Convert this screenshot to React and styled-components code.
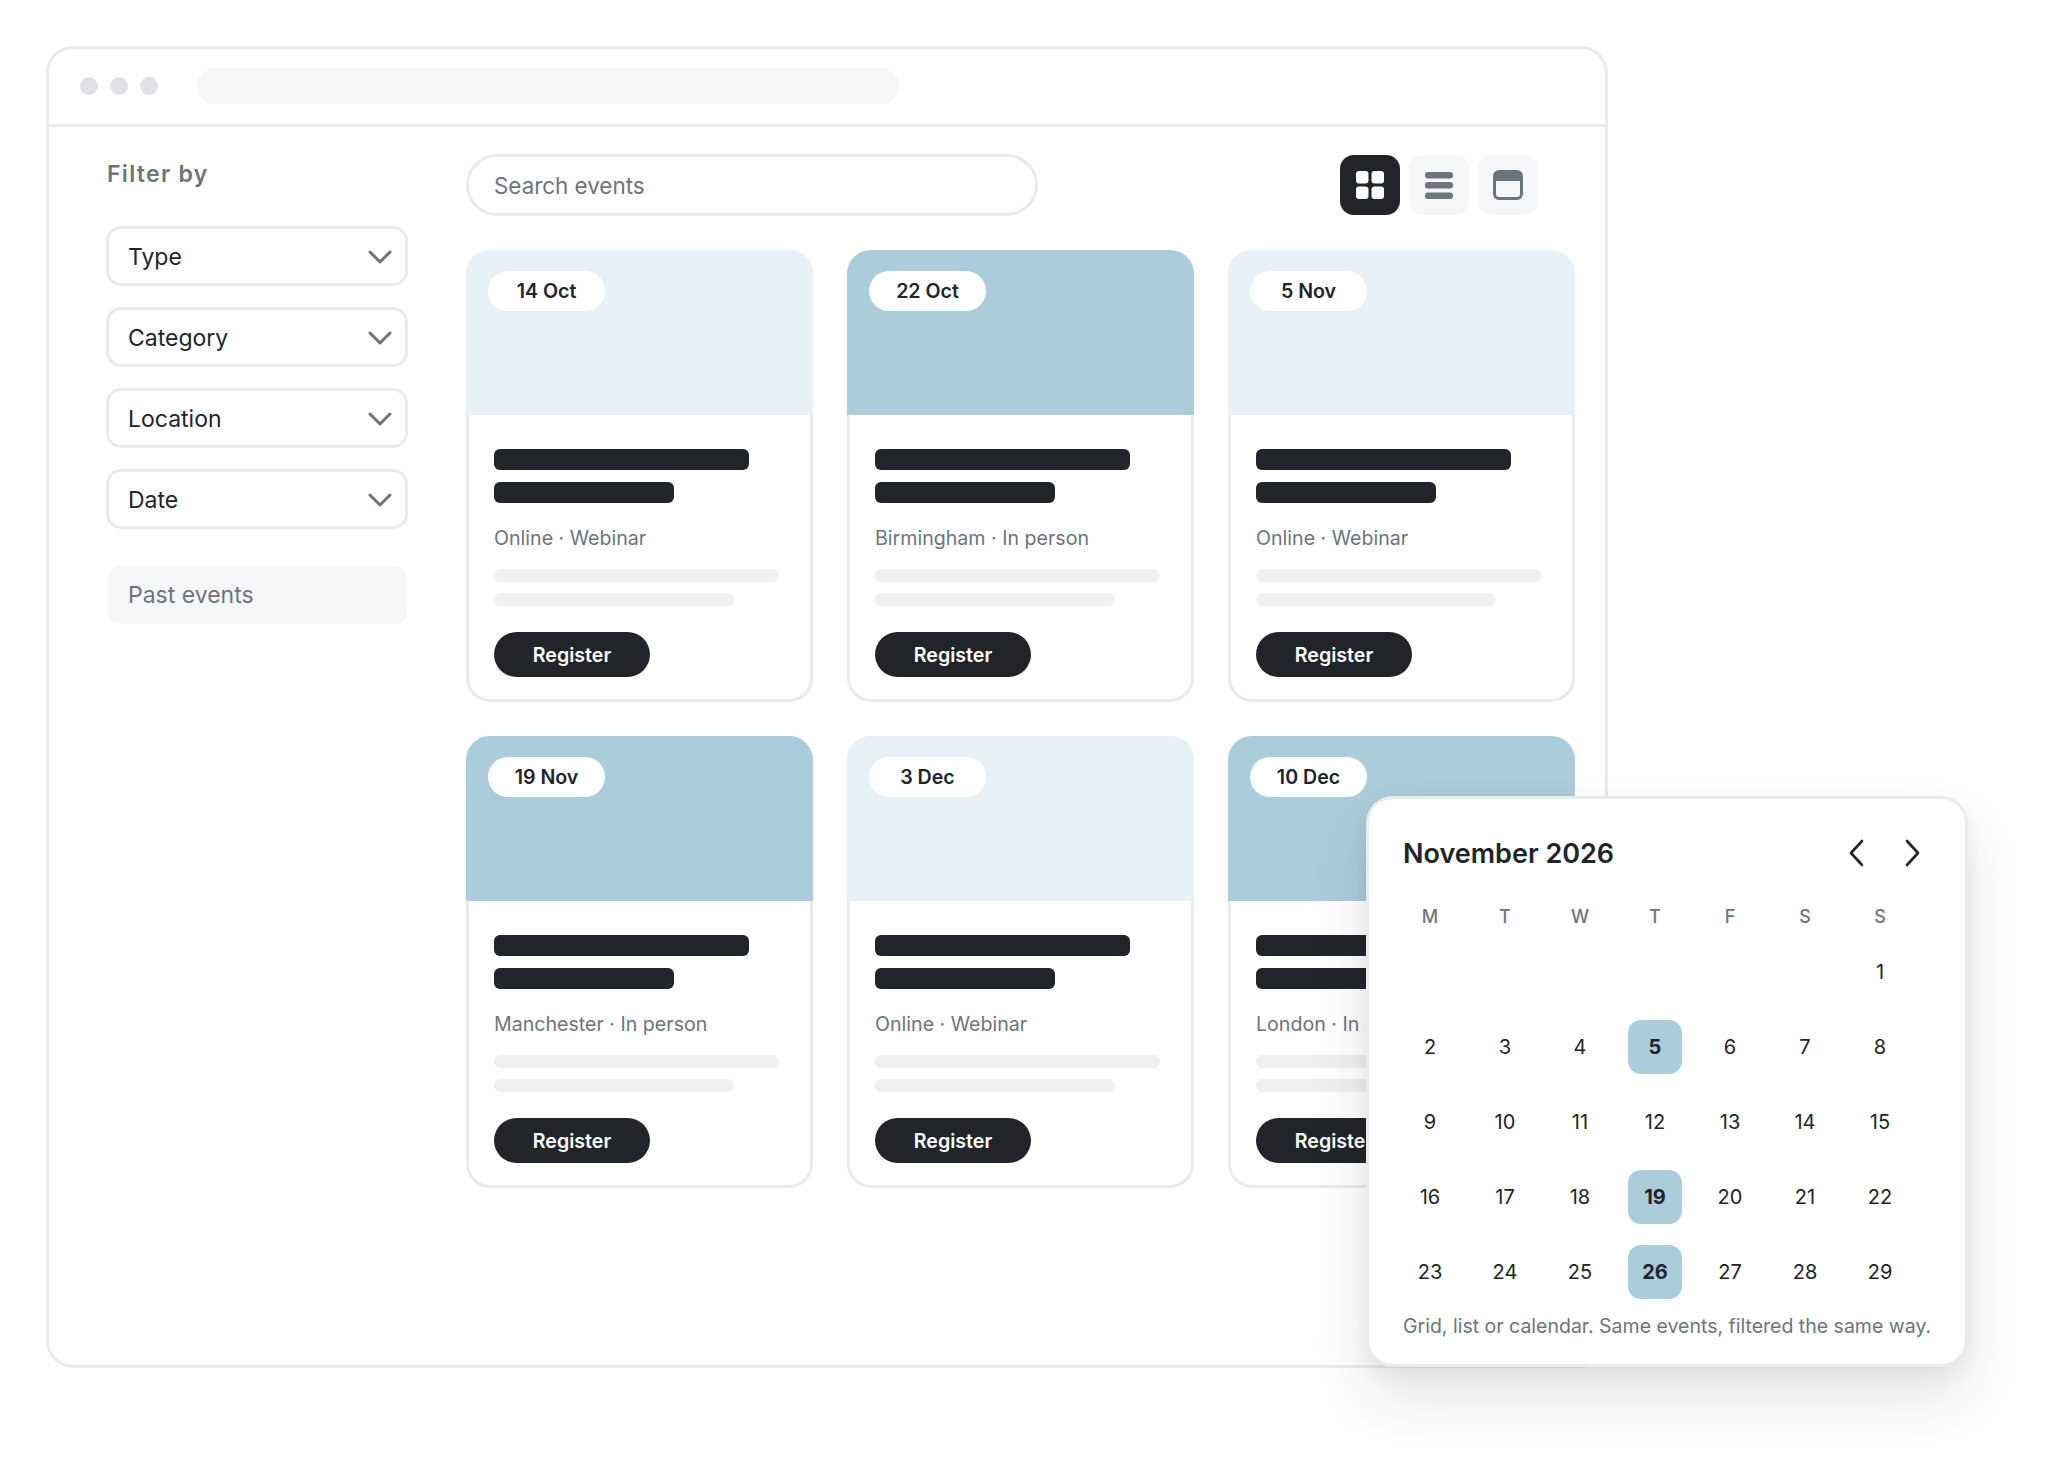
import React from 'react';
import styled, { createGlobalStyle } from 'styled-components';

const GlobalStyle = createGlobalStyle`
    * {
        box-sizing: border-box;
    }
    body {
        margin: 0;
        background: #fff;
        font-family: Inter, "Liberation Sans", sans-serif;
        color: #212529;
    }
`;

const Stage = styled.div`
    position: relative;
    width: 2057px;
    height: 1457px;
    padding: 46px 0 0 46px;
    overflow: hidden;
`;

const BrowserWindow = styled.div`
    width: 1562px;
    height: 1322px;
    border: 3px solid #e9ecef;
    border-radius: 27px;
    background: #fff;
`;

const TitleBar = styled.div`
    display: flex;
    align-items: center;
    height: 78px;
    padding: 0 0 1px 31px;
    border-bottom: 3px solid #e9ecef;
`;

const Dots = styled.div`
    display: flex;
    gap: 12px;
    margin-right: 39px;
`;

const Dot = styled.span`
    width: 18px;
    height: 18px;
    border-radius: 50%;
    background: #dee2e6;
`;

const UrlBar = styled.div`
    width: 702px;
    height: 36px;
    border-radius: 18px;
    background: #f5f7f8;
`;

const Content = styled.div`
    display: flex;
`;

const Sidebar = styled.aside`
    width: 417px;
    padding: 32px 0 0 57px;
`;

const SidebarTitle = styled.div`
    height: 30px;
    margin: 0 0 37px 1px;
    font-size: 23px;
    line-height: 30px;
    font-weight: 600;
    letter-spacing: 1.3px;
    color: #6c757d;
`;

const Filters = styled.div`
    display: flex;
    flex-direction: column;
    gap: 21px;
    width: 302px;
`;

const Select = styled.div`
    display: flex;
    align-items: center;
    justify-content: space-between;
    height: 60px;
    padding: 1px 13px 0 19px;
    border: 3px solid #e9ecef;
    border-radius: 15px;
    font-size: 23px;
    color: #212529;
`;

const PastEvents = styled.div`
    display: flex;
    align-items: center;
    width: 299px;
    height: 58px;
    margin: 37px 0 0 2px;
    padding-left: 20px;
    border-radius: 12px;
    background: #f5f7f8;
    font-size: 23px;
    color: #6c757d;
`;

const Main = styled.main`
    width: 1109px;
    padding-top: 27px;
`;

const Toolbar = styled.div`
    display: flex;
    align-items: center;
    justify-content: space-between;
    padding-right: 37px;
    margin-bottom: 34px;
`;

const Search = styled.div`
    display: flex;
    align-items: center;
    width: 572px;
    height: 62px;
    padding-left: 25px;
    border: 3px solid #e9ecef;
    border-radius: 31px;
    font-size: 22.4px;
    color: #6c757d;
`;

const ViewButtons = styled.div`
    display: flex;
    gap: 9px;
`;

const ViewButton = styled.div`
    display: flex;
    align-items: center;
    justify-content: center;
    width: 60px;
    height: 60px;
    border-radius: 14px;
    background: ${(p) => (p.$active ? '#212529' : '#f5f7f8')};
    color: ${(p) => (p.$active ? '#fff' : '#6c757d')};
`;

const CardGrid = styled.div`
    display: grid;
    grid-template-columns: repeat(3, 347px);
    gap: 34px;
`;

const Card = styled.article`
    height: 452px;
    border: 3px solid #e9ecef;
    border-radius: 24px;
    background: #fff;
`;

const CardImage = styled.div`
    height: 165px;
    margin: -3px -3px 0;
    padding: 21px 0 0 22px;
    border-radius: 24px 24px 0 0;
    background: ${(p) => (p.$blue ? '#abccda' : '#e8f1f6')};
`;

const DatePill = styled.span`
    display: flex;
    align-items: center;
    justify-content: center;
    width: 117px;
    height: 40px;
    border-radius: 20px;
    background: #fff;
    font-size: 19.6px;
    font-weight: 600;
    color: #212529;
`;

const CardBody = styled.div`
    padding: 34px 0 0 25px;
`;

const TitleLine = styled.div`
    width: ${(p) => p.$width}px;
    height: 21px;
    margin-bottom: 12px;
    border-radius: 6px;
    background: #212529;
`;

const Meta = styled.div`
    height: 28px;
    margin: 21px 0 17px;
    font-size: 19.6px;
    line-height: 28px;
    color: #6c757d;
`;

const TextLine = styled.div`
    width: ${(p) => p.$width}px;
    height: 13px;
    margin-bottom: 11px;
    border-radius: 7px;
    background: #eef0f2;
`;

const RegisterButton = styled.div`
    display: flex;
    align-items: center;
    justify-content: center;
    width: 156px;
    height: 45px;
    margin-top: 26px;
    border-radius: 23px;
    background: #212529;
    font-size: 19.6px;
    font-weight: 600;
    color: #fff;
`;

const CalendarPanel = styled.section`
    position: absolute;
    left: 1366px;
    top: 796px;
    width: 602px;
    height: 571px;
    padding: 34px 34px 0;
    border: 3px solid #e9ecef;
    border-radius: 27px;
    background: #fff;
    box-shadow: 0 30px 60px rgba(33, 37, 41, 0.12), 0 8px 20px rgba(33, 37, 41, 0.05);
`;

const CalendarHeader = styled.div`
    display: flex;
    align-items: center;
    justify-content: space-between;
    height: 40px;
    padding-right: 11px;
    margin-bottom: 26px;
`;

const Month = styled.h2`
    margin: 0;
    font-size: 27px;
    font-weight: 600;
    color: #212529;
`;

const Arrows = styled.div`
    display: flex;
    gap: 41px;
    color: #212529;
`;

const WeekGrid = styled.div`
    display: grid;
    grid-template-columns: repeat(7, 75px);
    margin-left: -10.5px;
`;

const Weekday = styled.div`
    display: flex;
    align-items: center;
    justify-content: center;
    height: 35px;
    font-size: 18px;
    font-weight: 500;
    color: #6c757d;
`;

const DayCell = styled.div`
    display: flex;
    align-items: center;
    justify-content: center;
    height: 75px;
`;

const Day = styled.span`
    display: flex;
    align-items: center;
    justify-content: center;
    width: 54px;
    height: 54px;
    border-radius: 13px;
    background: ${(p) => (p.$marked ? '#abccda' : 'transparent')};
    font-size: 20px;
    font-weight: ${(p) => (p.$marked ? 700 : 400)};
    color: #212529;
`;

const CalendarNote = styled.p`
    margin: 4px 0 0;
    font-size: 19.5px;
    line-height: 26px;
    color: #6c757d;
    white-space: nowrap;
`;

const events = [
    { date: '14 Oct', meta: 'Online · Webinar' },
    { date: '22 Oct', meta: 'Birmingham · In person', blue: true },
    { date: '5 Nov', meta: 'Online · Webinar' },
    { date: '19 Nov', meta: 'Manchester · In person', blue: true },
    { date: '3 Dec', meta: 'Online · Webinar' },
    { date: '10 Dec', meta: 'London · In person', blue: true },
];

const weekdays = ['M', 'T', 'W', 'T', 'F', 'S', 'S'];
const markedDays = [5, 19, 26];
const days = [...Array(6).fill(null), ...Array.from({ length: 29 }, (_, i) => i + 1)];

function Chevron() {
    return (
        <svg width="24" height="14" viewBox="0 0 24 14" fill="none" stroke="#6c757d" strokeWidth="3" strokeLinecap="round" strokeLinejoin="round">
            <polyline points="2,2 12,12 22,2" />
        </svg>
    );
}

function GridIcon() {
    return (
        <svg width="28" height="28" viewBox="0 0 28 28" fill="currentColor">
            <rect x="0" y="0" width="12.5" height="12.5" rx="3" />
            <rect x="15.5" y="0" width="12.5" height="12.5" rx="3" />
            <rect x="0" y="15.5" width="12.5" height="12.5" rx="3" />
            <rect x="15.5" y="15.5" width="12.5" height="12.5" rx="3" />
        </svg>
    );
}

function ListIcon() {
    return (
        <svg width="28" height="28" viewBox="0 0 28 28" fill="currentColor">
            <rect x="0" y="1" width="28" height="6.5" rx="3" />
            <rect x="0" y="11" width="28" height="6.5" rx="3" />
            <rect x="0" y="21.5" width="28" height="6.5" rx="3" />
        </svg>
    );
}

function CalendarIcon() {
    return (
        <svg width="30" height="30" viewBox="0 0 30 30" fill="none">
            <rect x="1.5" y="1.5" width="27" height="27" rx="4.5" stroke="currentColor" strokeWidth="3" />
            <path d="M1.5 11V6a4.5 4.5 0 0 1 4.5-4.5h18a4.5 4.5 0 0 1 4.5 4.5v5z" fill="currentColor" />
        </svg>
    );
}

function Arrow({ points }) {
    return (
        <svg width="15" height="28" viewBox="0 0 15 28" fill="none" stroke="currentColor" strokeWidth="2.6" strokeLinecap="round" strokeLinejoin="round">
            <polyline points={points} />
        </svg>
    );
}

export default function App() {
    return (
        <Stage>
            <GlobalStyle />
            <BrowserWindow>
                <TitleBar>
                    <Dots>
                        <Dot />
                        <Dot />
                        <Dot />
                    </Dots>
                    <UrlBar />
                </TitleBar>
                <Content>
                    <Sidebar>
                        <SidebarTitle>Filter by</SidebarTitle>
                        <Filters>
                            {['Type', 'Category', 'Location', 'Date'].map((label) => (
                                <Select key={label}>
                                    {label}
                                    <Chevron />
                                </Select>
                            ))}
                        </Filters>
                        <PastEvents>Past events</PastEvents>
                    </Sidebar>
                    <Main>
                        <Toolbar>
                            <Search>Search events</Search>
                            <ViewButtons>
                                <ViewButton $active>
                                    <GridIcon />
                                </ViewButton>
                                <ViewButton>
                                    <ListIcon />
                                </ViewButton>
                                <ViewButton>
                                    <CalendarIcon />
                                </ViewButton>
                            </ViewButtons>
                        </Toolbar>
                        <CardGrid>
                            {events.map((event) => (
                                <Card key={event.date}>
                                    <CardImage $blue={event.blue}>
                                        <DatePill>{event.date}</DatePill>
                                    </CardImage>
                                    <CardBody>
                                        <TitleLine $width={255} />
                                        <TitleLine $width={180} />
                                        <Meta>{event.meta}</Meta>
                                        <TextLine $width={285} />
                                        <TextLine $width={240} />
                                        <RegisterButton>Register</RegisterButton>
                                    </CardBody>
                                </Card>
                            ))}
                        </CardGrid>
                    </Main>
                </Content>
            </BrowserWindow>
            <CalendarPanel>
                <CalendarHeader>
                    <Month>November 2026</Month>
                    <Arrows>
                        <Arrow points="13,2 2,14 13,26" />
                        <Arrow points="2,2 13,14 2,26" />
                    </Arrows>
                </CalendarHeader>
                <WeekGrid>
                    {weekdays.map((day, i) => (
                        <Weekday key={i}>{day}</Weekday>
                    ))}
                    {days.map((day, i) => (
                        <DayCell key={i}>
                            {day && <Day $marked={markedDays.includes(day)}>{day}</Day>}
                        </DayCell>
                    ))}
                </WeekGrid>
                <CalendarNote>Grid, list or calendar. Same events, filtered the same way.</CalendarNote>
            </CalendarPanel>
        </Stage>
    );
}
